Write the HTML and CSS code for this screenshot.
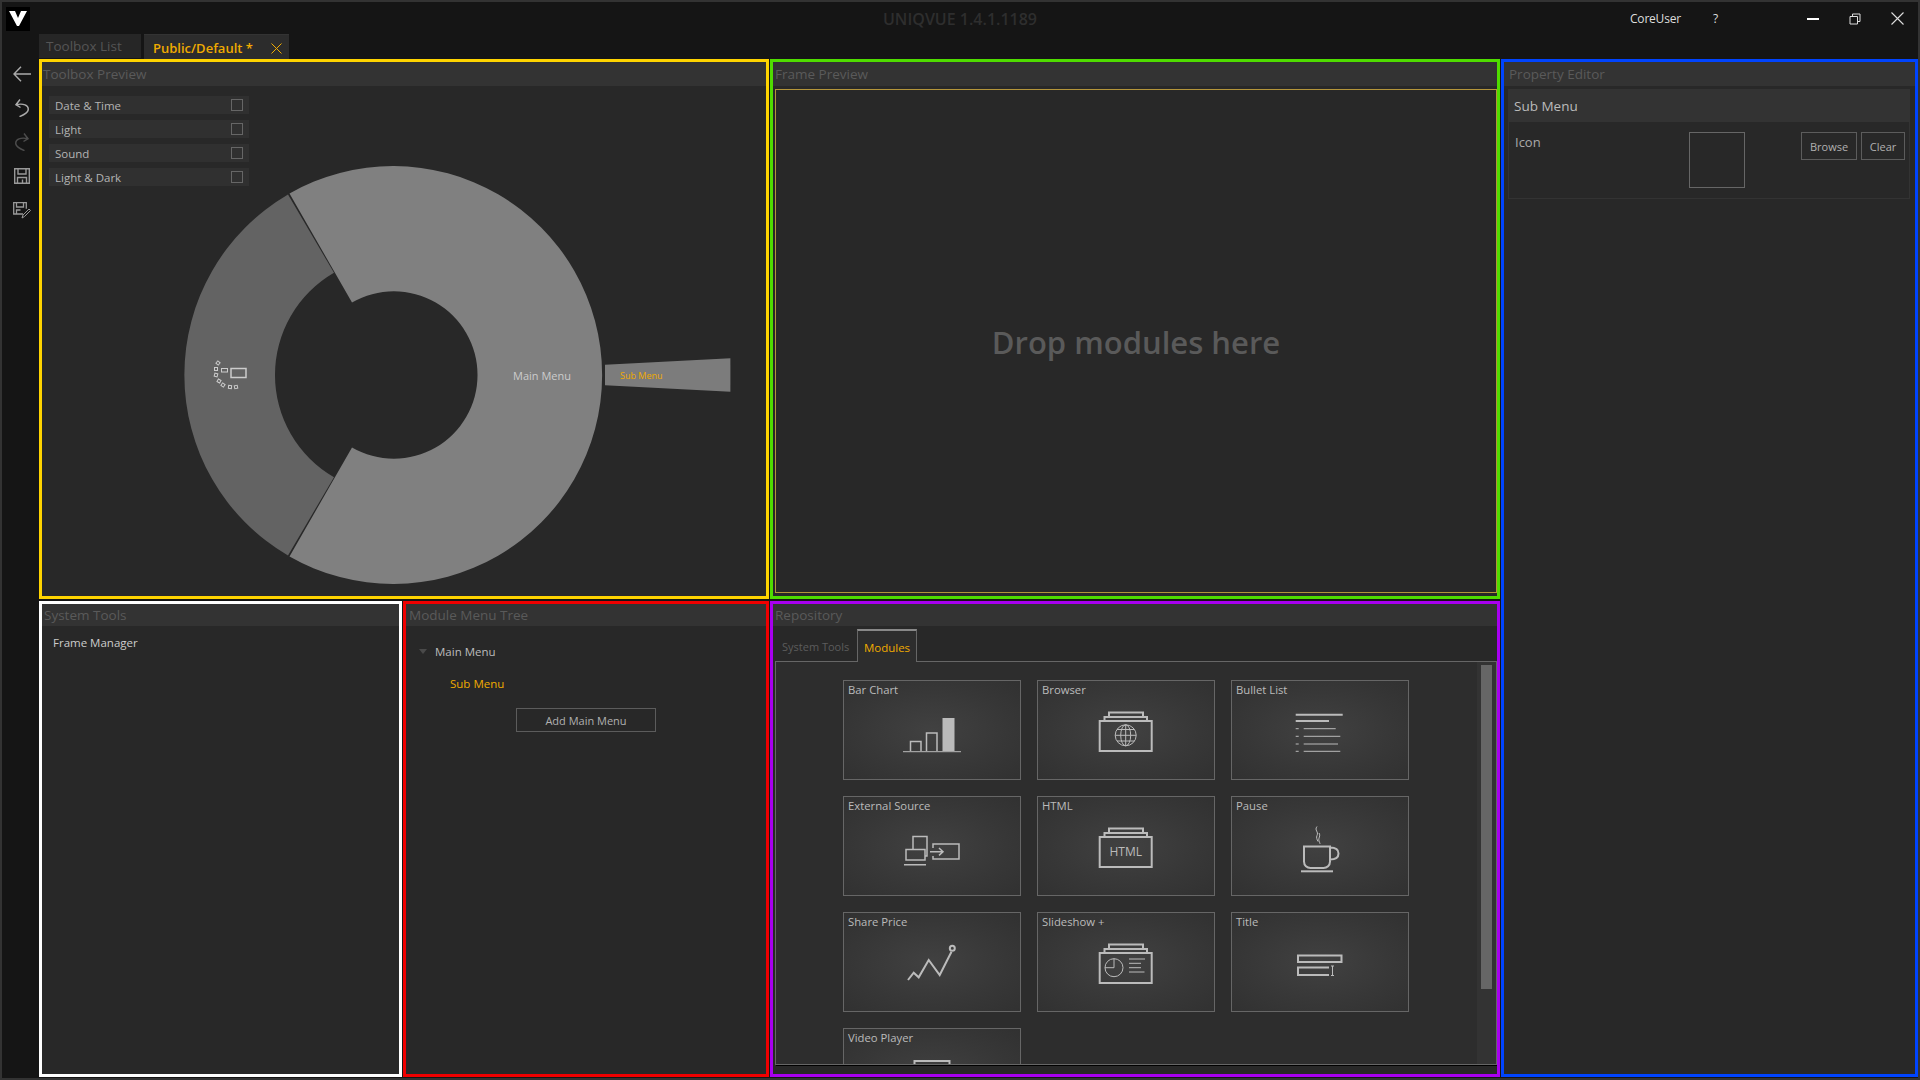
FILE: index.html
```html
<!DOCTYPE html>
<html lang="en">
<head>
    <meta charset="UTF-8">
    <title>UNIQVUE</title>
    <link rel="stylesheet" href="styles.css">
</head>
<body>
    <div class="window">
        <header class="titlebar">
            <div class="logo">
                <svg width="24" height="24" viewBox="0 0 24 24"><path d="M3 4h6l3 7 3-7h6l-8 15h-2z" fill="#fff"/></svg>
            </div>
            <div class="app-title">UNIQVUE 1.4.1.1189</div>
            <div class="title-right">
                <span class="user">CoreUser</span>
                <span class="help">?</span>
                <svg class="win-btn min" width="12" height="12" viewBox="0 0 12 12"><path d="M0 6h12" stroke="#fff" stroke-width="2"/></svg>
                <svg class="win-btn restore" width="12" height="12" viewBox="0 0 12 12"><path d="M1 3.500h7.500v7.500H1zM3.500 3.500V1H11v7.500H8.500" fill="none" stroke="#ddd"/></svg>
                <svg class="win-btn close" width="13" height="13" viewBox="0 0 13 13"><path d="M.5.500l12 12M12.500.500l-12 12" stroke="#ddd" stroke-width="1.100"/></svg>
            </div>
        </header>

        <nav class="sidebar">
            <div class="side-btn"><svg width="18" height="16" viewBox="0 0 18 16"><path d="M18 8H1M8 .7L1 8l7 7.300" fill="none" stroke="#aaa" stroke-width="1.400"/></svg></div>
            <div class="side-btn"><svg width="14" height="18" viewBox="0 0 14 18"><path d="M5 .5L1 5.700l4.500 2.800M1 5.700C8 4 14 6 13.200 11c-.4 2-4.700 5-8.700 6.700" fill="none" stroke="#aaa" stroke-width="1.400"/></svg></div>
            <div class="side-btn"><svg width="14" height="18" viewBox="0 0 14 18"><path d="M9 .5l4 5.200-4.500 2.800M13 5.700C6 4 0 6 .8 11c.4 2 4.700 5 8.700 6.700" fill="none" stroke="#4c4c4c" stroke-width="1.400"/></svg></div>
            <div class="side-btn"><svg width="16" height="16" viewBox="0 0 16 16"><path d="M.7.700h14.600v14.600H.7zM4 1v5h8V1M3.500 15V9.500h9V15M8.500 11.500V15" fill="none" stroke="#999" stroke-width="1.400"/></svg></div>
            <div class="side-btn"><svg width="18" height="17" viewBox="0 0 18 17"><path d="M10 12H.7V.7h12.600v6M3.500 1v4h7V1M3.500 12V8h4" fill="none" stroke="#999" stroke-width="1.300"/><path d="M9 16l1-3 6-6 1.500 1.500-6 6z" fill="none" stroke="#999"/></svg></div>
        </nav>

        <div class="tabs">
            <div class="tab">Toolbox List</div>
            <div class="tab active">
                <span>Public/Default *</span>
                <svg width="11" height="11" viewBox="0 0 11 11"><path d="M.5.500l10 10M10.500.500l-10 10" stroke="#f0ab00"/></svg>
            </div>
        </div>

        <main class="workspace">
            <section class="panel toolbox">
                <h2 class="panel-title">Toolbox Preview</h2>
                <div class="check-list">
                    <div class="check-row"><span>Date &amp; Time</span><i class="check"></i></div>
                    <div class="check-row"><span>Light</span><i class="check"></i></div>
                    <div class="check-row"><span>Sound</span><i class="check"></i></div>
                    <div class="check-row"><span>Light &amp; Dark</span><i class="check"></i></div>
                </div>
                <!-- svg is 1:1 with the panel interior, origin at 42,62 -->
                <svg class="wheel" width="724" height="534" viewBox="42 62 724 534">
                    <path d="M289.500 193.500A209 209 0 1 1 289.500 556.500L352 447.500A83.700 83.700 0 1 0 352 302.500Z" fill="#808080"/>
                    <path d="M288 194.500A209 209 0 0 0 288 555.500L334 477.200A118 118 0 0 1 334 272.800Z" fill="#636363"/>
                    <path d="M605 364.700L730.400 358.300V391.700L605 385.300Z" fill="#7c7c7c"/>
                    <text x="513" y="380" class="wheel-main">Main Menu</text>
                    <text x="620" y="379" class="wheel-sub">Sub Menu</text>
                    <g fill="none" stroke="#ccc">
                        <rect x="231" y="368.500" width="15" height="9" stroke-width="1.500"/>
                        <rect x="221.500" y="368.500" width="6" height="3.500"/>
                        <rect x="216.500" y="361.500" width="3" height="3" transform="rotate(40 218 363)"/>
                        <rect x="214.500" y="367.500" width="3" height="3"/>
                        <rect x="214.500" y="373.500" width="3" height="3" transform="rotate(15 216 375)"/>
                        <rect x="217.500" y="379.500" width="3" height="3" transform="rotate(30 219 381)"/>
                        <rect x="221.500" y="383.500" width="3" height="3" transform="rotate(35 223 385)"/>
                        <rect x="228.500" y="385.500" width="3" height="3" transform="rotate(5 230 387)"/>
                        <rect x="234.500" y="385.500" width="3" height="3" transform="rotate(-12 236 387)"/>
                    </g>
                </svg>
            </section>

            <section class="panel frame">
                <h2 class="panel-title">Frame Preview</h2>
                <div class="drop-zone">Drop modules here</div>
            </section>

            <section class="panel property">
                <h2 class="panel-title">Property Editor</h2>
                <div class="prop-card">
                    <div class="prop-head">Sub Menu</div>
                    <div class="prop-body">
                        <span class="prop-label">Icon</span>
                        <div class="icon-box"></div>
                        <div class="prop-buttons">
                            <button class="btn browse">Browse</button>
                            <button class="btn clear">Clear</button>
                        </div>
                    </div>
                </div>
            </section>

            <section class="panel tools">
                <h2 class="panel-title">System Tools</h2>
                <div class="tools-item">Frame Manager</div>
            </section>

            <section class="panel tree">
                <h2 class="panel-title">Module Menu Tree</h2>
                <div class="tree-main"><i class="tree-arrow"></i>Main Menu</div>
                <div class="tree-sub">Sub Menu</div>
                <button class="btn add-menu">Add Main Menu</button>
            </section>

            <section class="panel repo">
                <h2 class="panel-title">Repository</h2>
                <div class="repo-tabs">
                    <div class="repo-tab">System Tools</div>
                    <div class="repo-tab active">Modules</div>
                </div>
                <div class="repo-box">
                    <div class="tile-grid">
                        <div class="tile">
                            <div class="tile-label">Bar Chart</div>
                            <svg class="tile-icon" viewBox="1 19 176 80">
                                <path class="thin" d="M60 71.700h58"/>
                                <path class="thick" d="M67.500 71V61.500H78V71M83.500 71V53H94V71" />
                                <rect class="solid" x="99.500" y="38" width="12" height="33"/>
                            </svg>
                        </div>
                        <div class="tile">
                            <div class="tile-label">Browser</div>
                            <svg class="tile-icon" viewBox="1 19 176 80">
                                <rect x="62.700" y="41" width="52" height="30"/>
                                <path d="M67.500 41v-4h42.500v4M72 37v-4.500h34V37"/>
                                <g class="thin">
                                    <circle cx="88.700" cy="55.300" r="10.500"/>
                                    <ellipse cx="88.700" cy="55.300" rx="5" ry="10.500"/>
                                    <path d="M88.700 44.800v21M78.200 55.300h21M80 49.500h17.400M80 61h17.400"/>
                                </g>
                            </svg>
                        </div>
                        <div class="tile">
                            <div class="tile-label">Bullet List</div>
                            <svg class="tile-icon" viewBox="1 19 176 80">
                                <path d="M64.700 34.700h47M64.700 41H98"/>
                                <g class="thin">
                                    <path d="M64.700 48.700h3M72.700 48.700h32M64.700 56.300h3M72.700 56.300h36.600M64.700 64h3M72.700 64h34.300M64.700 71.300h3M72.700 71.300h36.600"/>
                                </g>
                            </svg>
                        </div>
                        <div class="tile">
                            <div class="tile-label">External Source</div>
                            <svg class="tile-icon" viewBox="1 19 176 80">
                                <path class="thick" d="M70 53V40.500h14V60h-2M63 53.500h19V64H63zM61 68.700h22"/>
                                <path class="thick" d="M90 52v-4h26v15H90v-3"/>
                                <path class="thick" d="M87 55.700h13M96 52l4 3.700-4 3.700"/>
                            </svg>
                        </div>
                        <div class="tile">
                            <div class="tile-label">HTML</div>
                            <svg class="tile-icon" viewBox="1 19 176 80">
                                <rect x="62.700" y="41" width="52" height="30"/>
                                <path d="M67.500 41v-4h42.500v4M72 37v-4.500h34V37"/>
                                <text x="88.700" y="60" class="icon-text">HTML</text>
                            </svg>
                        </div>
                        <div class="tile">
                            <div class="tile-label">Pause</div>
                            <svg class="tile-icon" viewBox="1 19 176 80">
                                <path d="M73 50.500h26v15c0 4-3 6.500-6.500 6.500h-13c-3.500 0-6.500-2.500-6.500-6.500zM99 51.500c5 0 8.500 1.500 8.500 6s-3.500 6-8.500 6"/>
                                <path d="M70 75.300h32"/>
                                <path class="thin" d="M86 30.500c-3 4 2 5 0 9-1 2 0 4 1 6M88 37c2 3-1 5 0 8 .5 1.500 1 2 1 3"/>
                            </svg>
                        </div>
                        <div class="tile">
                            <div class="tile-label">Share Price</div>
                            <svg class="tile-icon" viewBox="1 19 176 80">
                                <path d="M65 68l5.700-7.300 5 4.600 10-17.300 11 15 11.800-23.300"/>
                                <circle cx="109.300" cy="36.300" r="2.500"/>
                            </svg>
                        </div>
                        <div class="tile">
                            <div class="tile-label">Slideshow +</div>
                            <svg class="tile-icon" viewBox="1 19 176 80">
                                <rect x="62.700" y="41" width="52" height="30"/>
                                <path d="M67.500 41v-4h42.500v4M72 37v-4.500h34V37"/>
                                <g class="thin">
                                    <circle cx="77" cy="55.700" r="9"/>
                                    <path d="M77 46.700v9h-9M92 47h16M92 51.300h12M92 55.700h12M92 60h15.500"/>
                                </g>
                            </svg>
                        </div>
                        <div class="tile">
                            <div class="tile-label">Title</div>
                            <svg class="tile-icon" viewBox="1 19 176 80">
                                <path d="M67 43.500h43.500V50H67zM98 55.500H67V63h31"/>
                                <path class="thin" d="M101.500 54v9.500M100 54h3M100 63.500h3"/>
                            </svg>
                        </div>
                        <div class="tile">
                            <div class="tile-label">Video Player</div>
                            <svg class="tile-icon" viewBox="1 19 176 80">
                                <rect x="71.500" y="33" width="35" height="30"/>
                            </svg>
                        </div>
                    </div>
                    <div class="scrollbar"><div class="scroll-thumb"></div></div>
                </div>
            </section>
        </main>
    </div>
</body>
</html>
```

FILE: styles.css
```css
* {
    box-sizing: border-box;
}
html, body {
    margin: 0;
    height: 100%;
}
body {
    font-family: "Open Sans", "Noto Sans", sans-serif;
    background-color: #151515;
    overflow: hidden;
}
.window {
    width: 1920px;
    height: 1080px;
    border: 2px solid #333;
    background-color: #151515;
    display: grid;
    grid-template-columns: 37px 1fr;
    grid-template-rows: 32px 25px 1018px;
}

/* barra de titulo */
.titlebar {
    grid-column: 1 / 3;
    display: grid;
    grid-template-columns: 1fr auto 1fr;
    align-items: center;
}
.logo {
    width: 24px;
    height: 24px;
    margin: 2px 0 0 4px;
    background-color: #000;
}
.logo svg {
    display: block;
}
.app-title {
    color: #2e2e2e;
    font-size: 16px;
    font-weight: 600;
    padding-top: 2px;
}
.title-right {
    display: flex;
    justify-content: flex-end;
    align-items: center;
    padding: 1px 14px 0 0;
    color: #ddd;
    font-size: 12px;
}
.user {
    letter-spacing: -0.2px;
    width: 83px;
}
.help {
    width: 94px;
}
.min {
    margin-right: 30px;
}
.restore {
    margin-right: 30px;
}

/* barra lateral */
.sidebar {
    grid-row: 2 / 4;
    display: flex;
    flex-direction: column;
    padding: 23px 0 0 3px;
}
.side-btn {
    height: 34px;
    display: flex;
    align-items: center;
    justify-content: center;
}

/* pestañas */
.tabs {
    display: flex;
    gap: 3px;
}
.tab {
    width: 102px;
    height: 24px;
    padding-left: 7px;
    background-color: #262626;
    color: #555;
    font-size: 13.500px;
    line-height: 25px;
}
.tab.active {
    width: 145px;
    height: 25px;
    padding: 3px 7px 0 9px;
    background-color: #2c2c2c;
    border-top: 1px solid #333;
    color: #f0ab00;
    font-size: 13px;
    font-weight: 600;
    display: flex;
    align-items: center;
    justify-content: space-between;
}

/* paneles */
.workspace {
    display: grid;
    grid-template-columns: 363px 366px 730px 417px;
    grid-template-rows: 540px 476px;
    column-gap: 1px;
    row-gap: 2px;
}
.panel {
    background-color: #282828;
    border: 3px solid;
    overflow: hidden;
}
.panel-title {
    margin: 0;
    height: 24px;
    padding-left: 1px;
    background-color: #333;
    color: #5a5a5a;
    font-size: 13.500px;
    font-weight: 400;
    line-height: 25px;
}
.toolbox {
    grid-column: 1 / 3;
    border-color: #ffd400;
    position: relative;
}
.frame {
    border-color: #4fdc00;
    display: flex;
    flex-direction: column;
}
.frame .panel-title {
    padding-left: 2px;
}
.property {
    grid-row: 1 / 3;
    grid-column: 4;
    border-color: #0044ff;
}
.property .panel-title {
    padding-left: 5px;
}
.tools {
    border-color: #fff;
}
.tree {
    border-color: #f00000;
}
.repo {
    border-color: #a800f0;
}
.tools .panel-title, .tree .panel-title, .repo .panel-title {
    height: 22px;
    line-height: 22px;
    padding-left: 2px;
}
.tree .panel-title {
    padding-left: 3px;
}

/* toolbox preview */
.check-list {
    display: flex;
    flex-direction: column;
    gap: 6px;
    width: 200px;
    margin: 10px 0 0 7px;
}
.check-row {
    height: 18px;
    padding: 0 6px;
    display: flex;
    align-items: center;
    justify-content: space-between;
    background-color: #303030;
    color: #b4b4b4;
    font-size: 11.500px;
}
.check {
    width: 12px;
    height: 12px;
    border: 1px solid #666;
}
.wheel {
    position: absolute;
    left: 0;
    top: 0;
}
.wheel-main {
    font-size: 11px;
    fill: #ccc;
}
.wheel-sub {
    font-size: 9px;
    fill: #f0ab00;
}

/* frame preview */
.drop-zone {
    flex: 1;
    margin: 3px 0 3px 2px;
    padding-top: 2px;
    border: 1px solid #b4953a;
    display: flex;
    align-items: center;
    justify-content: center;
    color: #5a5a5a;
    font-size: 31px;
    font-weight: 600;
}

/* property editor */
.prop-card {
    margin: 3px 5px 0 4px;
}
.prop-head {
    height: 33px;
    padding: 1px 0 0 6px;
    background-color: #333;
    color: #bbb;
    font-size: 13.500px;
    line-height: 33px;
}
.prop-body {
    height: 77px;
    padding: 10px 4px 0 6px;
    border: 1px solid #333;
    border-top: none;
    display: grid;
    grid-template-columns: 174px 56px 1fr;
}
.prop-label {
    color: #aaa;
    font-size: 13px;
    padding-top: 1px;
}
.icon-box {
    width: 56px;
    height: 56px;
    border: 1px solid #666;
}
.prop-buttons {
    display: flex;
    justify-content: flex-end;
    gap: 4px;
}
.btn {
    height: 28px;
    padding: 0;
    background-color: transparent;
    border: 1px solid #5c5c5c;
    color: #b0b0b0;
    font-family: inherit;
    font-size: 11px;
    cursor: pointer;
}
.browse {
    width: 56px;
}
.clear {
    width: 44px;
}

/* system tools */
.tools-item {
    margin: 9px 0 0 11px;
    color: #ccc;
    font-size: 11.500px;
}

/* arbol de menu */
.tree-main {
    display: flex;
    align-items: center;
    height: 18px;
    margin: 16px 0 0 13px;
    color: #bbb;
    font-size: 11.500px;
}
.tree-arrow {
    width: 0;
    height: 0;
    margin-right: 8px;
    border: 4px solid transparent;
    border-top: 5px solid #4a4a4a;
    border-bottom: none;
}
.tree-sub {
    height: 18px;
    margin: 15px 0 0 44px;
    color: #f0ab00;
    font-size: 11.500px;
    line-height: 18px;
}
.add-menu {
    display: block;
    width: 140px;
    height: 24px;
    margin: 15px 0 0 110px;
}

/* repositorio */
.repo-tabs {
    display: flex;
    height: 36px;
    padding: 3px 0 0 2px;
}
.repo-tab {
    height: 32px;
    padding: 0 0 0 7px;
    width: 82px;
    color: #5c5c5c;
    font-size: 11px;
    line-height: 35px;
}
.repo-tab.active {
    width: 60px;
    height: 33px;
    padding: 0;
    text-align: center;
    background-color: #2d2d2d;
    border: 1px solid #666;
    border-top: 2px solid #888;
    border-bottom: none;
    color: #f0ab00;
    font-size: 11.500px;
    line-height: 33px;
    position: relative;
    z-index: 1;
}
.repo-box {
    height: 404px;
    margin: -1px 0 0 2px;
    width: 722px;
    background-color: #2d2d2d;
    border: 1px solid #666;
    box-shadow: 1px 1px 0 #000;
    display: flex;
    overflow: hidden;
}
.tile-grid {
    flex: 1;
    display: grid;
    grid-template-columns: repeat(3, 178px);
    grid-auto-rows: 100px;
    gap: 16px;
    padding: 18px 0 0 67px;
}
.tile {
    border: 1px solid #666;
    background: radial-gradient(ellipse at center, #414141 0%, #373737 60%, #313131 100%);
}
.tile-label {
    height: 18px;
    padding: 1px 0 0 4px;
    color: #bbb;
    font-size: 11.300px;
    line-height: 15px;
}
.tile-icon {
    display: block;
    width: 176px;
    height: 80px;
    fill: none;
    stroke: #bbb;
    stroke-width: 2;
}
.tile-icon .thin {
    stroke-width: 1;
}
.tile-icon .thick {
    stroke-width: 1.500;
}
.tile-icon .solid {
    fill: #bbb;
    stroke: none;
}
.tile-icon .icon-text {
    fill: #bbb;
    stroke: none;
    font-size: 12px;
    text-anchor: middle;
}
.scrollbar {
    width: 19px;
    background-color: #333;
    padding: 3px 4px;
}
.scroll-thumb {
    width: 11px;
    height: 324px;
    background-color: #666;
}
```
